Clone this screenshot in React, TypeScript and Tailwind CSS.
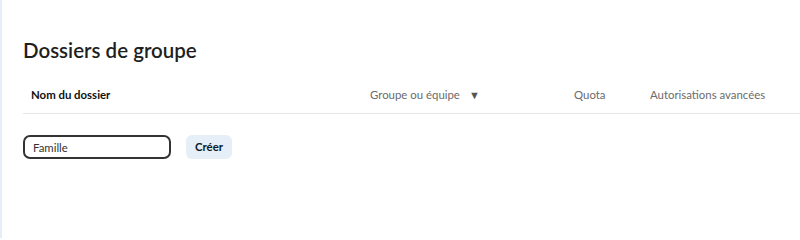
import React from 'react';

const App = () => {
  return (
    <div className="h-[238px] w-[800px] bg-white border-l-2 border-[#e3eef8] font-['Lato',sans-serif] text-[#222]">
      <div className="pl-[21px] pt-[36px]">
        <h2 className="text-[20.5px] font-semibold leading-[28px] text-[#1f1f1f]">Dossiers de groupe</h2>

        {/* Table header */}
        <div className="mt-[13px] flex items-center h-[37px] border-b border-[#e6e6e6] text-[11.4px]">
          <div className="w-[347px] pl-[8px] font-bold text-[#111]">Nom du dossier</div>
          <div className="w-[204px] flex items-center text-[#6b6b6b]">
            Groupe ou équipe
            <span className="ml-[9px] text-[11px] text-[#555]">▼</span>
          </div>
          <div className="w-[76px] text-[#6b6b6b]">Quota</div>
          <div className="text-[#6b6b6b]">Autorisations avancées</div>
        </div>

        {/* Create row */}
        <div className="mt-[21px] flex items-center gap-[15px]">
          <input
            defaultValue="Famille"
            className="w-[148px] h-[24px] border-2 border-[#333] rounded-[7px] px-[8px] text-[11.4px] text-[#333] outline-none"
          />
          <button className="h-[24px] px-[9px] rounded-[6px] bg-[#e6eff7] text-[11.4px] font-bold text-[#0b1a2a]">
            Créer
          </button>
        </div>
      </div>
    </div>
  );
};

export default App;
